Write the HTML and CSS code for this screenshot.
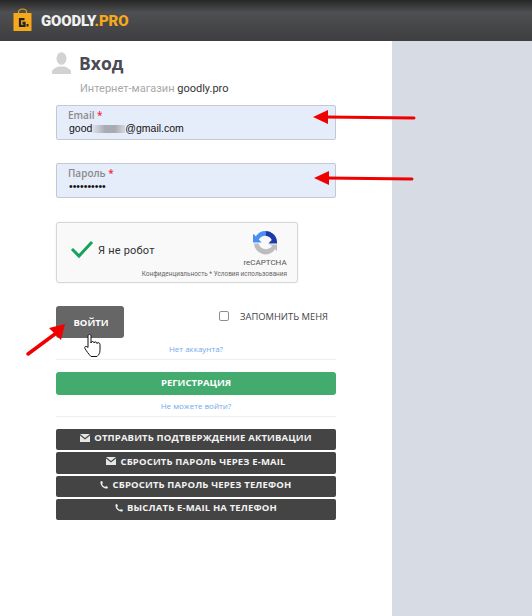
FILE: index.html
```html
<!DOCTYPE html>
<html lang="ru">
<head>
<meta charset="utf-8">
<title>Вход</title>
<link rel="stylesheet" href="styles.css">
</head>
<body>
<header class="topbar">
  <svg class="logo-bag" width="19" height="23" viewBox="0 0 19 23">
    <path d="M5.500 6V4a4 3 0 0 1 8 0v2" fill="none" stroke="#e8a11c" stroke-width="1.200"/>
    <rect x="0.500" y="5" width="18" height="18" fill="#f5a81c"/>
    <path d="M11.500 11.200H7v6.600h4.500v-3H9.500" fill="none" stroke="#222" stroke-width="2.200"/>
    <rect x="13.500" y="16" width="2" height="2.500" fill="#222"/>
  </svg>
  <span class="brand">GOODLY<span class="brand-accent">.PRO</span></span>
</header>
<div class="page">
  <main class="content">
    <div class="title-row">
      <svg class="avatar" width="19" height="22" viewBox="0 0 19 22">
        <ellipse cx="9.500" cy="6.500" rx="5" ry="6.300" fill="#d2d2d2"/>
        <path d="M0 22v-2.500c0-2.500 4-3.500 6-5h7c2 1.500 6 2.500 6 5V22z" fill="#d2d2d2"/>
      </svg>
      <h1 class="title">Вход</h1>
    </div>
    <p class="subtitle">Интернет-магазин <span class="subtitle-dark">goodly.pro</span></p>

    <div class="field">
      <div class="field-label">Email <span class="req">*</span></div>
      <div class="field-value">good<span class="blur"></span>@gmail.com</div>
    </div>
    <div class="field field-password">
      <div class="field-label">Пароль <span class="req">*</span></div>
      <div class="field-dots">••••••••••</div>
    </div>

    <div class="captcha">
      <svg class="check" width="24" height="20" viewBox="0 0 24 20">
        <path d="M2 10l7 7L22 3" fill="none" stroke="#14a35c" stroke-width="3"/>
      </svg>
      <span class="captcha-text">Я не робот</span>
      <div class="captcha-side">
        <svg width="25" height="25" viewBox="0 0 26 26">
          <path d="M13 1a12 12 0 0 0-10 5.500L0 4v9h9l-3-3a8 8 0 0 1 7-4z" fill="#4a90f2"/>
          <path d="M13 1a12 12 0 0 1 12 12v1h-9l3.500-3.500A8 8 0 0 0 13 6z" fill="#1c3aa9"/>
          <path d="M1 14a12 12 0 0 0 22 6l2 2v-7h-8l3 2a8 8 0 0 1-14-3z" fill="#bdbdbd"/>
        </svg>
        <div class="captcha-brand">reCAPTCHA</div>
      </div>
      <div class="captcha-legal">Конфиденциальность * Условия использования</div>
    </div>

    <div class="login-row">
      <button class="btn-login">ВОЙТИ</button>
      <label class="remember"><span class="checkbox"></span>ЗАПОМНИТЬ МЕНЯ</label>
    </div>
    <div class="link-row"><a class="link">Нет аккаунта?</a></div>
    <button class="btn-register">РЕГИСТРАЦИЯ</button>
    <div class="link-row"><a class="link">Не можете войти?</a></div>

    <div class="actions">
      <button class="btn-dark"><svg class="ico" width="10" height="8" viewBox="0 0 10 8"><path d="M0 0h10L5 4z M0 1.500l5 4 5-4V8H0z" fill="#e6e6e6"/></svg>ОТПРАВИТЬ ПОДТВЕРЖДЕНИЕ АКТИВАЦИИ</button>
      <button class="btn-dark"><svg class="ico" width="10" height="8" viewBox="0 0 10 8"><path d="M0 0h10L5 4z M0 1.500l5 4 5-4V8H0z" fill="#e6e6e6"/></svg>СБРОСИТЬ ПАРОЛЬ ЧЕРЕЗ E-MAIL</button>
      <button class="btn-dark"><svg class="ico" width="8" height="8" viewBox="0 0 8 8"><path d="M0.500 0.500L2 0l1 2-1 1c.5 1.200 1.500 2.200 3 3l1-1 2 1-.5 1.500C3.500 8 0 4.500.5.500z" fill="#eee"/></svg>СБРОСИТЬ ПАРОЛЬ ЧЕРЕЗ ТЕЛЕФОН</button>
      <button class="btn-dark"><svg class="ico" width="8" height="8" viewBox="0 0 8 8"><path d="M0.500 0.500L2 0l1 2-1 1c.5 1.200 1.500 2.200 3 3l1-1 2 1-.5 1.500C3.500 8 0 4.500.5.500z" fill="#eee"/></svg>ВЫСЛАТЬ E-MAIL НА ТЕЛЕФОН</button>
    </div>
  </main>
  <aside class="sidebar"></aside>
</div>

<svg class="overlay" width="532" height="616" viewBox="0 0 532 616">
  <g fill="#f00000" stroke="#f00000">
    <path d="M313 117l15-7v14z" stroke-width="0"/>
    <path d="M326 117l88 1" stroke-width="3" stroke-linecap="round" fill="none"/>
    <path d="M314 178l15-7v14z" stroke-width="0"/>
    <path d="M327 178l85 1" stroke-width="3" stroke-linecap="round" fill="none"/>
    <path d="M65 324l-4 16-12-12z" stroke-width="0"/>
    <path d="M55 334l-27 20" stroke-width="3.500" stroke-linecap="round" fill="none"/>
  </g>
  <path d="M88 336c0-2 3-2 3 0v7c0-2 3-2 3 0 0-1.500 3-1.500 3 .5 0-1.500 3-1 3 1v6c0 3-2 5-3 6h-6c-2-2-5-6-6-8-1-2 1-3 3-1z" fill="#fff" stroke="#111" stroke-width="1"/>
</svg>
</body>
</html>
```
FILE: styles.css
```css
* { box-sizing: border-box; }
html, body { margin: 0; height: 100%; }
body { width: 532px; height: 616px; overflow: hidden; background: #fff; font-family: "Roboto", "Liberation Sans", sans-serif; position: relative; }

.topbar { height: 41px; display: flex; align-items: center; padding: 0 0 0 13px; background: linear-gradient(#262626 0, #4e4f51 30%, #3e3e40 100%); }
.logo-bag { margin-right: 9px; margin-top: -3px; }
.brand { font: 900 15px/1 "Roboto", sans-serif; color: #f1f1f1; margin-top: 1px; letter-spacing: -0.15px; }
.brand-accent { color: #f5a81c; }

.page { display: flex; height: 575px; }
.content { width: 392px; padding: 0 56px; position: relative; }
.sidebar { flex: 1; background: #d7dbe4; }

.title-row { display: flex; align-items: center; margin: 11px 0 0 -4px; height: 22px; }
.avatar { margin-right: 8px; }
.title { margin: 0; font: 700 17.500px/22px "Open Sans", sans-serif; color: #4a4a55; }
.subtitle { margin: 8px 0 0 24px; font: 11px/14px "Roboto", sans-serif; color: #a8a8a8; }
.subtitle-dark { color: #333; }

.field { width: 280px; height: 35px; margin-top: 9px; padding: 3px 11px; background: #e6edfa; border: 1px solid #c5c8d2; border-radius: 2px; }
.field-password { margin-top: 23px; }
.field-label { font: 600 10px/12px "Open Sans", sans-serif; color: #8a8a8a; }
.req { color: #f5263c; }
.field-value { margin: 1px 0 0 1px; font: 10.500px/13px "Liberation Sans", sans-serif; color: #111; display: flex; align-items: center; }
.blur { display: inline-block; width: 33px; height: 8px; background: linear-gradient(90deg, #e0e4ee, #a9abb3 40%, #a9abb3 70%, #d5d8e2); }
.field-dots { margin: 1px 0 0 1px; font: 10.500px/13px "Liberation Sans", sans-serif; color: #111; }

.captcha { width: 242px; height: 61px; margin-top: 24px; background: #f9f9f9; border: 1px solid #d6d6d6; border-radius: 3px; box-shadow: 0 0 2px rgba(0,0,0,.08); position: relative; display: flex; align-items: center; padding: 0 10px 0 13px; }
.check { margin-top: -7px; }
.captcha-text { font: 11px/14px "Roboto", sans-serif; color: #333; margin: -3px 0 0 4px; letter-spacing: .2px; }
.captcha-side { margin-left: auto; width: 44px; display: flex; flex-direction: column; align-items: center; margin-top: -7px; }
.captcha-brand { font: 8px/10px "Roboto", sans-serif; color: #555; margin-top: 3px; white-space: nowrap; }
.captcha-legal { position: absolute; right: 10px; bottom: 4px; font: 6.400px/8px "Roboto", sans-serif; color: #666; white-space: nowrap; }

.login-row { display: flex; margin-top: 23px; height: 32px; align-items: flex-start; }
.btn-login { width: 68px; height: 32px; padding: 1px 0 0 2px; background: #666; color: #fff; border: 0; border-radius: 3px; font: 700 9.500px/1 "Open Sans", sans-serif; }
.remember { display: flex; align-items: center; margin: 5px 0 0 95px; font: 9.400px/12px "Open Sans", sans-serif; color: #444; white-space: nowrap; }
.checkbox { align-self: flex-start; width: 10px; height: 10px; border: 1px solid #8e8e8e; border-radius: 2px; background: #fff; margin-right: 11px; }

.link-row { width: 280px; height: 22px; padding-top: 5px; text-align: center; border-bottom: 1px solid #eee; font: 8px/12px "Open Sans", sans-serif; }
.link { color: #74a9ea; }

.btn-register { display: block; width: 280px; height: 23px; margin-top: 12px; padding: 0 0 2px; border: 0; border-radius: 3px; background: #44ab6e; color: #fff; font: 700 9.500px/1 "Open Sans", sans-serif; }

.actions { display: flex; flex-direction: column; gap: 2px; width: 280px; margin-top: 12px; }
.btn-dark { height: 21.250px; padding: 0 0 3px; border: 0; border-radius: 2px; background: #444; color: #f2f2f2; font: 700 9.500px/1 "Open Sans", sans-serif; letter-spacing: .15px; display: flex; align-items: center; justify-content: center; white-space: nowrap; }
.ico { margin-right: 4px; }

.overlay { position: absolute; left: 0; top: 0; pointer-events: none; }
```
